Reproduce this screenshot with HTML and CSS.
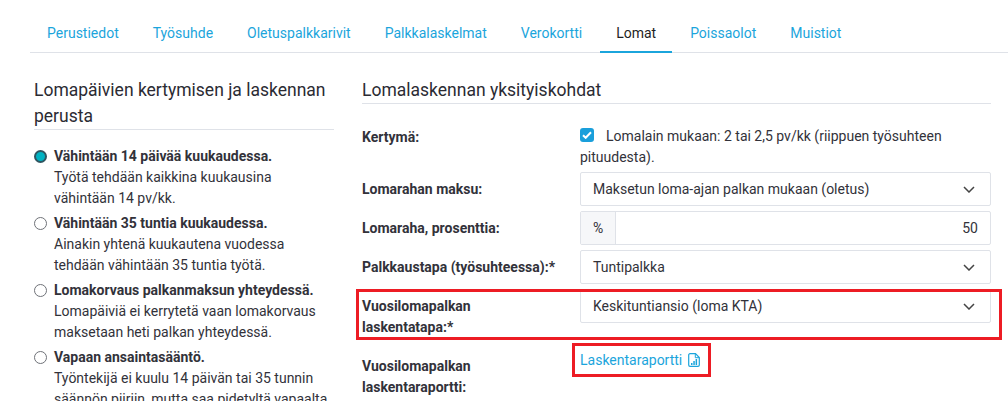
FILE: index.html
```html
<!DOCTYPE html>
<html lang="fi">
<head>
    <meta charset="UTF-8">
    <meta name="viewport" content="width=device-width, initial-scale=1.0">
    <title>Lomat</title>
    <link rel="stylesheet" href="styles.css">
</head>
<body>
    <ul class="tabs">
        <li><a href="#">Perustiedot</a></li>
        <li><a href="#">Työsuhde</a></li>
        <li><a href="#">Oletuspalkkarivit</a></li>
        <li><a href="#">Palkkalaskelmat</a></li>
        <li><a href="#">Verokortti</a></li>
        <li><a href="#" class="active">Lomat</a></li>
        <li><a href="#">Poissaolot</a></li>
        <li><a href="#">Muistiot</a></li>
    </ul>

    <div class="columns">
        <section class="basis">
            <h2>Lomapäivien kertymisen ja laskennan perusta</h2>

            <label class="option">
                <input type="radio" name="basis" checked>
                <span><b>Vähintään 14 päivää kuukaudessa.</b><br>Työtä tehdään kaikkina kuukausina<br>vähintään 14 pv/kk.</span>
            </label>
            <label class="option">
                <input type="radio" name="basis">
                <span><b>Vähintään 35 tuntia kuukaudessa.</b><br>Ainakin yhtenä kuukautena vuodessa<br>tehdään vähintään 35 tuntia työtä.</span>
            </label>
            <label class="option">
                <input type="radio" name="basis">
                <span><b>Lomakorvaus palkanmaksun yhteydessä.</b><br>Lomapäiviä ei kerrytetä vaan lomakorvaus<br>maksetaan heti palkan yhteydessä.</span>
            </label>
            <label class="option">
                <input type="radio" name="basis">
                <span><b>Vapaan ansaintasääntö.</b><br>Työntekijä ei kuulu 14 päivän tai 35 tunnin<br>säännön piiriin, mutta saa pidetyltä vapaalta</span>
            </label>
        </section>

        <section class="details">
            <h2>Lomalaskennan yksityiskohdat</h2>

            <div class="row">
                <div class="row-label">Kertymä:</div>
                <div class="row-text">
                    <span class="check">
                        <svg width="10" height="8" viewBox="0 0 10 8"><path d="M1 4.2 3.7 6.8 9 1.2" fill="none" stroke="#fff" stroke-width="2"/></svg>
                    </span>Lomalain mukaan: 2 tai 2,5 pv/kk (riippuen työsuhteen pituudesta).
                </div>
            </div>

            <div class="row">
                <div class="row-label">Lomarahan maksu:</div>
                <div class="select">
                    Maksetun loma-ajan palkan mukaan (oletus)
                    <svg class="chevron" width="12" height="7" viewBox="0 0 12 7"><path d="M1 1 6 6 11 1" fill="none" stroke="#444" stroke-width="1.5"/></svg>
                </div>
            </div>

            <div class="row">
                <div class="row-label">Lomaraha, prosenttia:</div>
                <div class="input-group">
                    <span class="addon">%</span>
                    <span class="value">50</span>
                </div>
            </div>

            <div class="row">
                <div class="row-label">Palkkaustapa (työsuhteessa):*</div>
                <div class="select">
                    Tuntipalkka
                    <svg class="chevron" width="12" height="7" viewBox="0 0 12 7"><path d="M1 1 6 6 11 1" fill="none" stroke="#444" stroke-width="1.5"/></svg>
                </div>
            </div>

            <div class="row">
                <div class="row-label">Vuosilomapalkan<br>laskentatapa:*</div>
                <div class="select">
                    Keskituntiansio (loma KTA)
                    <svg class="chevron" width="12" height="7" viewBox="0 0 12 7"><path d="M1 1 6 6 11 1" fill="none" stroke="#444" stroke-width="1.5"/></svg>
                </div>
                <div class="mark mark-method"></div>
            </div>

            <div class="row">
                <div class="row-label">Vuosilomapalkan<br>laskentaraportti:</div>
                <a href="#" class="report">
                    Laskentaraportti
                    <svg width="12" height="14" viewBox="0 0 12 14"><path d="M2 .7H7.5L11.3 4.5V12a1.3 1.3 0 0 1-1.3 1.3H2A1.3 1.3 0 0 1 .7 12V2A1.3 1.3 0 0 1 2 .7Z" fill="none" stroke="#1ba5dc" stroke-width="1.2"/><path d="M7.3.8V4.7H11.2" fill="none" stroke="#1ba5dc" stroke-width="1"/><path d="M3 10h1.5v2H3zM5.3 8h1.5v4H5.3zM7.6 6h1.5v6H7.6z" fill="#1ba5dc"/></svg>
                </a>
                <div class="mark mark-report"></div>
            </div>
        </section>
    </div>
</body>
</html>
```

FILE: styles.css
```css
html, body {
    height: 401px;
    overflow: hidden;
}
body {
    margin: 0;
    font-family: Roboto, sans-serif;
    font-size: 14px;
    line-height: 21px;
    color: #32323a;
    background: #fff;
}
a {
    color: #1ba5dc;
    text-decoration: none;
}
.tabs {
    display: flex;
    gap: 2px;
    height: 52px;
    margin: 0 0 0 30px;
    padding: 0 0 0 1px;
    list-style: none;
    border-bottom: 1px solid #dfe2e8;
    box-sizing: content-box;
}
.tabs a {
    display: block;
    height: 52px;
    padding: 23px 16px 0;
    box-sizing: border-box;
}
.tabs a.active {
    color: #1f1f24;
    border-bottom: 2px solid #1ba5dc;
    height: 53px;
}
.columns {
    display: flex;
    padding: 24px 17px 0 34px;
}
h2 {
    margin: 0;
    font-size: 17.5px;
    font-weight: 400;
    line-height: 26px;
    color: #2b2b33;
    border-bottom: 1px solid #dfe2e8;
}
.basis {
    flex: none;
    width: 300px;
    margin-right: 28px;
}
.basis h2 {
    margin-bottom: 16px;
}
.option {
    display: flex;
    gap: 7px;
    margin-bottom: 4px;
}
.option input {
    appearance: none;
    flex: none;
    width: 13px;
    height: 13px;
    margin: 4px 0 0;
    border: 1px solid #6f7278;
    border-radius: 50%;
    background: #fff;
}
.option input:checked {
    border: 2px solid #2f5560;
    background: #00b2c2;
}
.details {
    flex: 1;
}
.details h2 {
    margin-bottom: 16px;
}
.row {
    position: relative;
    display: flex;
    margin-bottom: 5px;
}
.row-label {
    flex: none;
    width: 218px;
    box-sizing: border-box;
    padding: 7px 15px 6px 0;
    font-weight: 700;
}
.row-text {
    flex: 1;
    margin-bottom: -1px;
    padding: 6px 30px 0 0;
}
.check {
    display: inline-flex;
    align-items: center;
    justify-content: center;
    width: 14px;
    height: 14px;
    margin: -4px 12px 0 0;
    border-radius: 3px;
    background: #1a9fdb;
    vertical-align: 2px;
}
.select, .input-group {
    flex: 1;
    display: flex;
    align-items: center;
    height: 34px;
    box-sizing: border-box;
    border: 1px solid #dfe2e8;
    border-radius: 2px;
    background: #fff;
}
.select {
    justify-content: space-between;
    padding: 0 15px 0 12px;
}
.addon {
    align-self: stretch;
    display: flex;
    align-items: center;
    width: 35px;
    box-sizing: border-box;
    padding-left: 12px;
    background: #f6f7f9;
    border-right: 1px solid #dfe2e8;
}
.value {
    flex: 1;
    padding-right: 12px;
    text-align: right;
}
.report {
    padding-top: 1px;
    height: 21px;
}
.report svg {
    margin-left: 2px;
    vertical-align: -2px;
}
/* red highlight boxes drawn on top of the form */
.mark {
    position: absolute;
    box-sizing: border-box;
    border: 3px solid #ed1c24;
}
.mark-method {
    left: -6px;
    top: 0;
    width: 646px;
    height: 51px;
}
.mark-report {
    left: 210px;
    top: -6px;
    width: 139px;
    height: 34px;
}
```
